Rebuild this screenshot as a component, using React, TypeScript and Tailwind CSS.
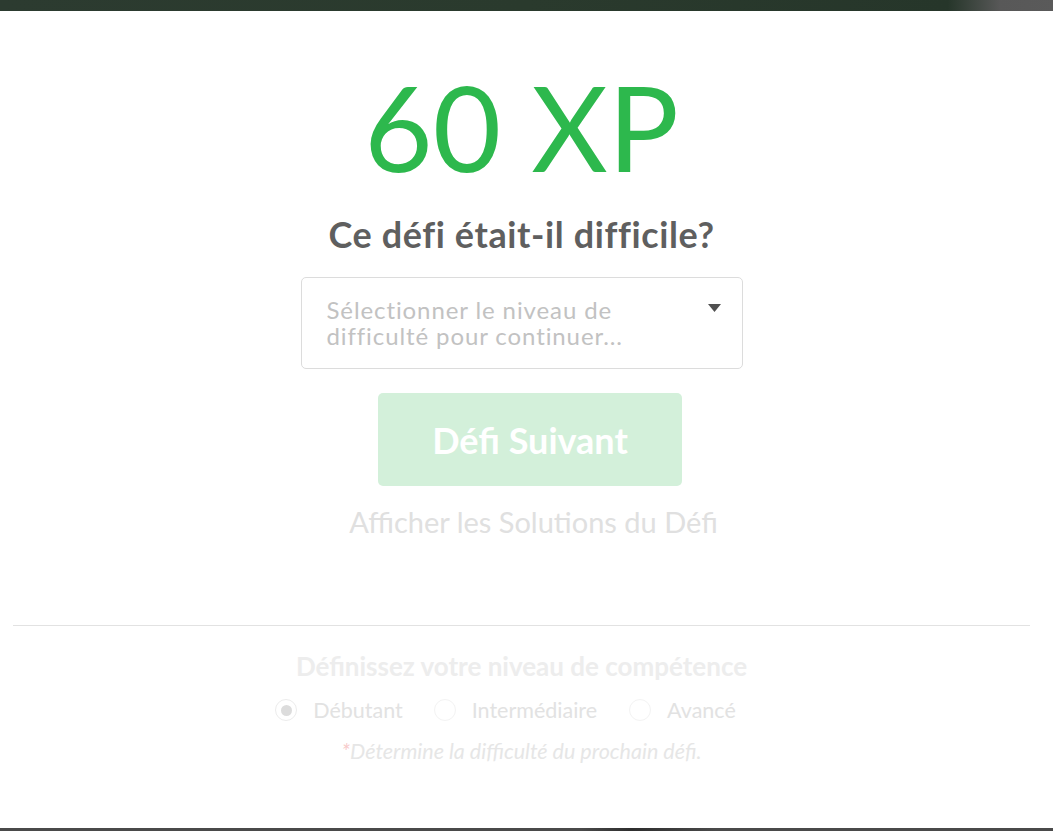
import React from "react";

export default function App() {
  const font = { fontFamily: "Lato, 'Noto Sans', sans-serif" };
  return (
    <div className="w-[1053px] h-[831px] flex flex-col bg-white overflow-hidden" style={font}>
      <div className="h-[11px] shrink-0 bg-[linear-gradient(90deg,#2c3b30_0%,#2a3a2d_50%,#26362a_90%,#585858_95%,#5a5a5a_100%)]" />
      <div className="flex-1 flex flex-col items-center pr-[10px]">
        <div className="mt-[57px] text-[118px] leading-none text-[#2db84d]">60 XP</div>
        <div className="mt-[26px] text-[36px] leading-[44px] font-bold tracking-[0.6px] text-[#5f5f5f]">Ce défi était-il difficile?</div>
        <div className="mt-[21px] w-[442px] h-[92px] border border-[#dcdcdc] rounded-[5px] flex items-start justify-between pl-[25px] pr-[21px] pt-[19px]">
          <div className="text-[24px] leading-[26px] tracking-[0.9px] text-[#c2c2c2] w-[340px]">
            Sélectionner le niveau de difficulté pour continuer...
          </div>
          <svg width="13" height="8" viewBox="0 0 13 8" className="mt-[7px]">
            <path d="M0 0 H13 L6.5 8 Z" fill="#505050" />
          </svg>
        </div>
        <div className="mt-[24px] pl-[17px]">
          <div className="w-[304px] h-[93px] rounded-[5px] bg-[#d3f0da] flex items-center justify-center text-white font-bold text-[36px]">
            Défi Suivant
          </div>
        </div>
        <div className="mt-[18px] pl-[24px] text-[29px] leading-[36px] text-[#e0e0e0]">Afficher les Solutions du Défi</div>
        <div className="mt-[85px] w-[1017px] h-px bg-[#e2e2e2]" />
        <div className="mt-[24px] text-[26px] leading-[32px] font-bold text-[#ededed]">Définissez votre niveau de compétence</div>
        <div className="mt-[15px] pr-[32px] flex items-center text-[21.5px] leading-[26px] text-[#e2e2e2]">
          <span className="w-[22px] h-[22px] rounded-full border border-[#ececec] flex items-center justify-center">
            <span className="w-[11px] h-[11px] rounded-full bg-[#dcdcdc]" />
          </span>
          <span className="ml-[16px]">Débutant</span>
          <span className="ml-[31px] w-[22px] h-[22px] rounded-full border border-[#f3f3f3]" />
          <span className="ml-[16px]">Intermédiaire</span>
          <span className="ml-[32px] w-[22px] h-[22px] rounded-full border border-[#f3f3f3]" />
          <span className="ml-[16px]">Avancé</span>
        </div>
        <div className="mt-[14px] text-[21.5px] leading-[28px] italic text-[#e6e6e6]">
          <span className="text-[#f7c9c9]">*</span>Détermine la difficulté du prochain défi.
        </div>
      </div>
      <div className="h-[3px] shrink-0 bg-[linear-gradient(90deg,#4a4a4a_0%,#4a4a4a_55%,#2e2e2e_60%,#4a4a4a_68%,#4a4a4a_100%)]" />
    </div>
  );
}
